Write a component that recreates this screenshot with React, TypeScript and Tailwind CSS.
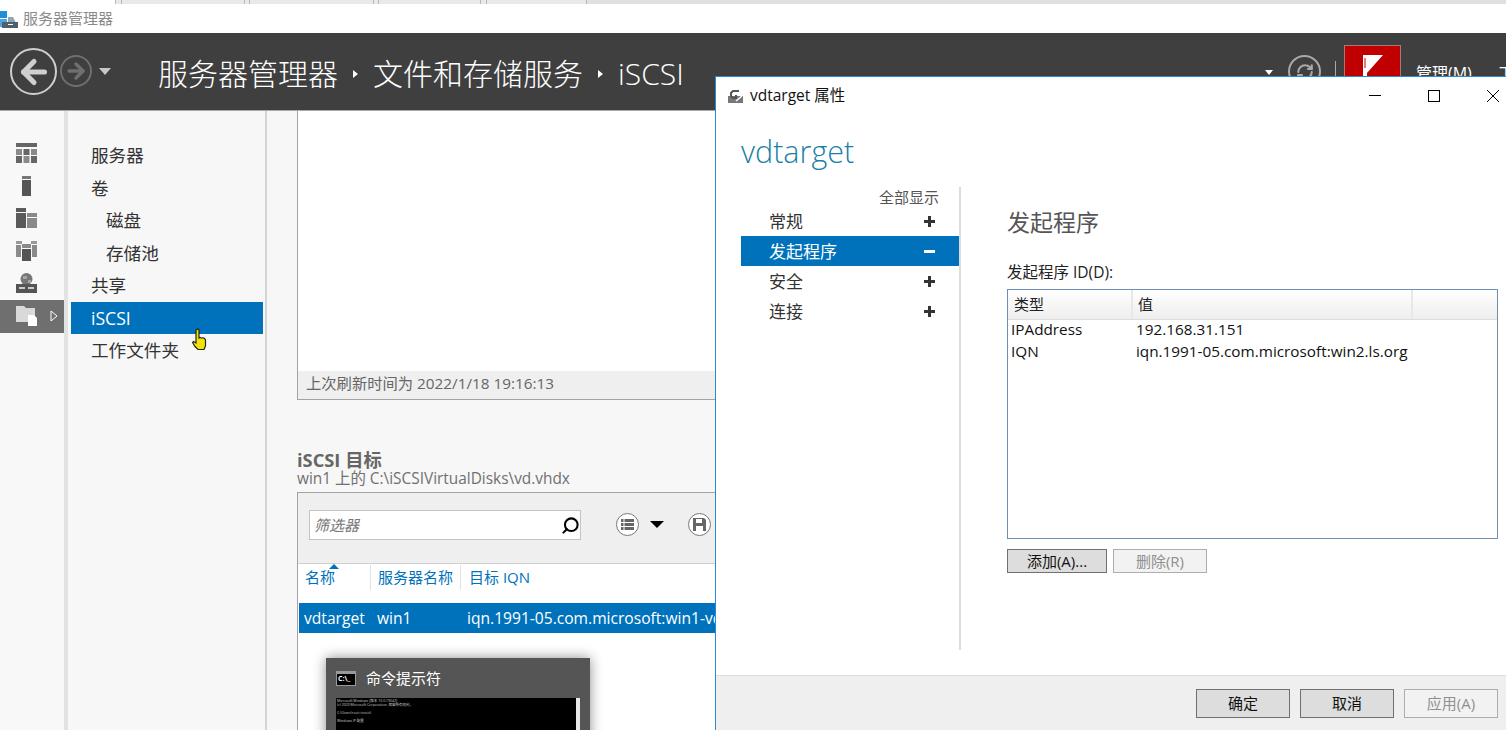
import { ArrowLeft, ArrowRight, RefreshCw, Search } from "lucide-react";

const sans = "font-['Open_Sans','Noto_Sans_CJK_SC',sans-serif]";

function RailIcon({ kind }: { kind: number }) {
	if (kind === 0) {
		return (
			<svg width="21" height="20" viewBox="0 0 21 20" fill="#666">
				<rect x="0" y="0" width="21" height="4" />
				<rect x="0" y="6" width="6" height="6" fill="#8a8a8a" />
				<rect x="7.5" y="6" width="6" height="6" />
				<rect x="15" y="6" width="6" height="6" fill="#8a8a8a" />
				<rect x="0" y="13" width="6" height="7" />
				<rect x="7.5" y="13" width="6" height="7" fill="#8a8a8a" />
				<rect x="15" y="13" width="6" height="7" />
			</svg>
		);
	}
	if (kind === 1) {
		return (
			<svg width="21" height="20" viewBox="0 0 21 20" fill="#555">
				<rect x="6" y="0" width="9" height="3" fill="#777" />
				<rect x="6" y="4" width="9" height="16" />
			</svg>
		);
	}
	if (kind === 2) {
		return (
			<svg width="21" height="20" viewBox="0 0 21 20" fill="#5a5a5a">
				<rect x="0" y="0" width="10" height="4" />
				<rect x="0" y="5" width="10" height="15" />
				<rect x="11" y="5" width="10" height="4" fill="#8a8a8a" />
				<rect x="11" y="10" width="10" height="10" fill="#8a8a8a" />
			</svg>
		);
	}
	if (kind === 3) {
		return (
			<svg width="21" height="20" viewBox="0 0 21 20" fill="#555">
				<rect x="0" y="0" width="6" height="3" fill="#999" />
				<rect x="15" y="0" width="6" height="3" fill="#999" />
				<rect x="0" y="4" width="5" height="12" fill="#8a8a8a" />
				<rect x="16" y="4" width="5" height="12" fill="#8a8a8a" />
				<rect x="6" y="3" width="9" height="4" fill="#8a8a8a" />
				<rect x="6" y="8" width="9" height="12" />
			</svg>
		);
	}
	if (kind === 4) {
		return (
			<svg width="21" height="20" viewBox="0 0 21 20" fill="#555">
				<circle cx="10.5" cy="6" r="6" fill="#777" />
				<path d="M7 3h4v3H7zM12 7h3v3h-3z" fill="#a5a5a5" />
				<rect x="0" y="11" width="21" height="9" />
				<rect x="3" y="14" width="6" height="2" fill="#ccc" />
				<rect x="12" y="14" width="6" height="2" fill="#ccc" />
			</svg>
		);
	}
	return (
		<svg width="21" height="20" viewBox="0 0 21 20">
			<path d="M0 0h8l2 2h9v14H0z" fill="#d9d9d9" />
			<path d="M12 9h6l3 3v8h-9z" fill="#fff" />
		</svg>
	);
}

function Rail() {
	return (
		<div className="w-16 shrink-0 pt-[26px] bg-[#f8f8f8]">
			{[0, 1, 2, 3, 4].map((k) => (
				<div key={k} className="h-[32.5px] pl-4 flex items-center">
					<RailIcon kind={k} />
				</div>
			))}
			<div className="h-[33px] pl-4 flex items-center gap-[13px] bg-[#6f6f6f]">
				<RailIcon kind={5} />
				<svg width="8" height="12" viewBox="0 0 8 12" fill="none" stroke="#fff">
					<path d="M1 1l6 5-6 5z" />
				</svg>
			</div>
		</div>
	);
}

function NavItem({ label, indent, active }: { label: string; indent?: boolean; active?: boolean }) {
	return (
		<div
			className={`h-[32.5px] flex items-center text-[17.6px] ${indent ? "pl-[35px]" : "pl-5"} ${
				active ? "bg-[#0072bc] text-white" : "text-[#333]"
			}`}
		>
			{label}
		</div>
	);
}

function Nav() {
	return (
		<div className="relative w-[199px] shrink-0 border-r-2 border-[#d4d4d4] pt-[28px] pl-[3px] pr-[2px] bg-[#f7f7f7]">
			<NavItem label="服务器" />
			<NavItem label="卷" />
			<NavItem label="磁盘" indent />
			<NavItem label="存储池" indent />
			<NavItem label="共享" />
			<NavItem label="iSCSI" active />
			<NavItem label="工作文件夹" />
			{/* hand cursor */}
			<svg className="absolute left-[124px] top-[217px]" width="16" height="24" viewBox="0 0 16 24">
				<path
					d="M5 1.5c1-1 2-.5 2 1V10l1-.5 1.500.5 1.500-.2 1.500.7 1 1.500V18l-1.500 3.500H6l-3-3-2.500-4 1-1 2.500 1.500V2z"
					fill="#f2e400"
					stroke="#222"
					strokeWidth="1.200"
				/>
			</svg>
		</div>
	);
}

function MainContent() {
	return (
		<div className="relative flex-1 min-w-0 pl-[30px] bg-[#f7f7f7]">
			<div className="w-full h-[289px] border-x border-b border-[#a3a3a3] bg-white flex flex-col justify-end">
				<div className="h-[28px] bg-[#efefef] pl-[8px] pb-[3px] flex items-center text-[15.300px] text-[#666]">
					上次刷新时间为 2022/1/18 19:16:13
				</div>
			</div>
			<div className="mt-[49px] text-[18.300px] leading-[21px] font-bold text-[#666]">iSCSI 目标</div>
			<div className="text-[15.400px] leading-[18px] text-[#707070]">win1 上的 C:\iSCSIVirtualDisks\vd.vhdx</div>
			<div className="mt-[4px] h-[300px] border-l border-t border-[#a3a3a3] bg-white">
				<div className="h-[71px] bg-[#efefef] border-b border-[#cfcfcf] flex pt-[17px] pl-[11px]">
					<div className="w-[272px] h-[30px] border border-[#c4c4c4] bg-white flex items-center justify-between pl-[4px] pr-0">
						<span className="text-[15px] italic text-[#777]">筛选器</span>
						<Search size={19} strokeWidth={2.6} className="text-black -scale-x-100" />
					</div>
					<div className="ml-[35px] mt-[3px] w-[23px] h-[23px] rounded-full border border-[#777] bg-white flex items-center justify-center">
						<svg width="13" height="11" viewBox="0 0 13 11" fill="#666">
							<rect x="0" y="0" width="2.500" height="3" />
							<rect x="3.500" y="0" width="9.500" height="3" />
							<rect x="0" y="4" width="2.500" height="3" />
							<rect x="3.500" y="4" width="9.500" height="3" />
							<rect x="0" y="8" width="2.500" height="3" />
							<rect x="3.500" y="8" width="9.500" height="3" />
						</svg>
					</div>
					<div className="ml-[11px] mt-[11px] w-0 h-0 border-x-[7px] border-x-transparent border-t-[7px] border-t-black" />
					<div className="ml-[24px] mt-[3px] w-[23px] h-[23px] rounded-full border border-[#777] bg-white flex items-center justify-center">
						<svg width="13" height="13" viewBox="0 0 13 13" fill="#666">
							<path d="M0 0h11l2 2v11H0z" />
							<rect x="3" y="1" width="6" height="4" fill="#fff" />
							<rect x="3" y="8" width="7" height="5" fill="#fff" />
						</svg>
					</div>
				</div>
				<div className="relative h-[39px] flex text-[15px] text-[#0072bc]">
					<div className="absolute left-[31px] top-[0px] w-0 h-0 border-x-[5px] border-x-transparent border-b-[5px] border-b-[#0072bc]" />
					<div className="w-[73px] h-[25px] mt-[1px] pl-[7px] pt-[1px] border-r border-[#e2e2e2]">名称</div>
					<div className="w-[90px] h-[25px] mt-[1px] pl-[7px] pt-[1px] border-r border-[#e2e2e2] whitespace-nowrap">服务器名称</div>
					<div className="pl-[8px] pt-[2px]">目标 IQN</div>
				</div>
				<div className="h-[30px] ml-[1px] pt-[1px] bg-[#0072bc] text-white text-[15.600px] flex items-center whitespace-nowrap overflow-hidden">
					<span className="w-[73px] pl-[5px]">vdtarget</span>
					<span className="w-[90px] pl-[5px]">win1</span>
					<span className="pl-[5px]">iqn.1991-05.com.microsoft:win1-vd</span>
				</div>
			</div>
			{/* taskbar thumbnail */}
			<div className="absolute left-[59px] top-[547px] w-[264px] h-[90px] bg-[#555] shadow-[0_0_12px_rgba(0,0,0,0.45)] pt-[9px] pl-[10px]">
				<div className="flex items-center gap-[10px]">
					<div className="w-5 h-[15px] bg-black border border-[#999] border-t-[3px] text-[7px] leading-[10px] text-white font-bold pl-[1px]">C:\_</div>
					<span className="text-[15px] text-white">命令提示符</span>
				</div>
				<div className="mt-[8px] w-[244px] h-[60px] bg-black flex justify-between">
					<div className="pl-[1px] pt-[1px] text-[3.500px] leading-[4px] text-[#ccc]">
						<div>Microsoft Windows [版本 10.0.19042]</div>
						<div>(c) 2020 Microsoft Corporation. 保留所有权利。</div>
						<div className="mt-[4px]">C:\Users\root&gt;iscsicli</div>
						<div className="mt-[4px]">Windows IP 配置</div>
					</div>
					<div className="w-[4px] bg-[#e8e8e8]" />
				</div>
			</div>
		</div>
	);
}

function Btn({ label, w, h, off }: { label: string; w: string; h: string; off?: boolean }) {
	return (
		<div
			className={`${w} ${h} flex items-center justify-center text-[15px] border ${
				off ? "border-[#adadad] bg-[#f2f2f2] text-[#8f8f8f]" : "border-[#707070] bg-[#dddddd] text-[#111]"
			}`}
		>
			{label}
		</div>
	);
}

function SideRow({ label, active }: { label: string; active?: boolean }) {
	return (
		<div
			className={`h-[30px] flex items-center justify-between pl-7 pr-[24px] text-[17px] ${
				active ? "bg-[#0072bc] text-white" : "text-[#333]"
			}`}
		>
			<span className="pt-[1px]">{label}</span>
			<span className="relative block w-[11px] h-[11px]">
				<span className={`absolute left-0 top-[4px] w-[11px] h-[3px] ${active ? "bg-white" : "bg-[#333]"}`} />
				{!active && <span className="absolute left-[4px] top-0 w-[3px] h-[11px] bg-[#333]" />}
			</span>
		</div>
	);
}

function Dialog() {
	return (
		<div className="absolute left-[715px] top-[76px] w-[791px] h-[654px] bg-white border-l border-t border-[#2b8ad6] flex flex-col">
			<div className="h-[37px] shrink-0 flex items-center pl-[11px]">
				<svg width="17" height="16" viewBox="0 0 17 16" fill="none">
					<path d="M1 8h15v7H1z" fill="#777" />
					<path d="M12 3H6L4 5v3l2 2h3V7" stroke="#555" strokeWidth="2" />
					<path d="M9 13l6-5" stroke="#fff" strokeWidth="1.500" />
				</svg>
				<span className="ml-[6px] text-[15.500px] text-[#111]">vdtarget 属性</span>
				<div className="ml-auto flex items-center">
					<span className="w-3 h-px bg-black" />
					<span className="ml-[47px] w-[12px] h-[12px] border border-black" />
					<svg className="ml-[46px] mr-[6px]" width="14" height="14" viewBox="0 0 14 14" stroke="#000" strokeWidth="1">
						<path d="M1 1l12 12M13 1L1 13" />
					</svg>
				</div>
			</div>
			<div className="flex-1 min-h-0 flex pl-[25px]">
				<div className="w-[220px] shrink-0">
					<div className="mt-[15px] h-[44px] text-[30.500px] leading-[44px] font-light text-[#1b7fa8]">vdtarget</div>
					<div className="mt-[14px] border-r-2 border-[#dcdcdc] h-[463px]">
						<div className="h-[19px] pr-[20px] text-right text-[15px] leading-[20px] text-[#555]">全部显示</div>
						<div className="w-[218px]">
							<SideRow label="常规" />
							<SideRow label="发起程序" active />
							<SideRow label="安全" />
							<SideRow label="连接" />
						</div>
					</div>
				</div>
				<div className="flex-1 min-w-0 pl-[46px] pr-[8px]">
					<div className="mt-[92px] text-[23px] leading-[32px] text-[#555]">发起程序</div>
					<div className="mt-[24px] text-[15.500px] leading-[20px] text-[#222]">发起程序 ID(D):</div>
					<div className="mt-[7px] h-[250px] border border-[#6d8fb3]">
						<div className="h-[30px] flex text-[15px] text-[#222] bg-gradient-to-b from-white to-[#eeeeee] border-b border-[#dcdcdc]">
							<div className="w-[125px] pl-[6px] pt-[3px] border-r-2 border-[#e8e8e8]">类型</div>
							<div className="w-[280px] pl-[5px] pt-[3px] border-r-2 border-[#e8e8e8]">值</div>
						</div>
						<div className="-mt-[2px] text-[15.300px] leading-[22px] text-[#111]">
							<div className="flex">
								<span className="w-[128px] pl-[3px]">IPAddress</span>
								<span>192.168.31.151</span>
							</div>
							<div className="flex">
								<span className="w-[128px] pl-[3px]">IQN</span>
								<span>iqn.1991-05.com.microsoft:win2.ls.org</span>
							</div>
						</div>
					</div>
					<div className="mt-[10px] flex gap-[6px]">
						<Btn label="添加(A)..." w="w-[100px]" h="h-[24px]" />
						<Btn label="删除(R)" w="w-[94px]" h="h-[24px]" off />
					</div>
				</div>
			</div>
			<div className="h-[55px] shrink-0 bg-[#efefef] border-t border-[#dcdcdc] flex items-center justify-end gap-[10px] pr-[8px]">
				<Btn label="确定" w="w-[94px]" h="h-[29px]" />
				<Btn label="取消" w="w-[94px]" h="h-[29px]" />
				<Btn label="应用(A)" w="w-[94px]" h="h-[29px]" off />
			</div>
		</div>
	);
}

export default function App() {
	return (
		<div className={`relative w-[1506px] h-[730px] overflow-hidden bg-white flex flex-col ${sans}`}>
			{/* browser tab strip */}
			<div className="h-1 shrink-0 bg-[#e0e0e2] flex">
				<div className="w-[116px] bg-white border-r border-[#b9b9b9]" />
				<div className="w-[6px] bg-[#e9e9ec] border-r border-[#b9b9b9]" />
				<div className="w-[123px] bg-[#e9e9ec] border-r border-[#b9b9b9]" />
				<div className="w-[5px] bg-[#e9e9ec] border-r border-[#b9b9b9]" />
				<div className="w-[124px] bg-[#e9e9ec] border-r border-[#b9b9b9]" />
				<div className="w-[5px] bg-[#e9e9ec] border-r border-[#b9b9b9]" />
				<div className="w-[102px] bg-[#e9e9ec] border-r border-[#b9b9b9]" />
				<div className="w-[6px] bg-[#e9e9ec] border-r border-[#b9b9b9]" />
				<div className="w-[100px] bg-[#e9e9ec] border-r border-[#b9b9b9]" />
			</div>
			{/* window title */}
			<div className="h-[29px] shrink-0 flex items-center">
				<svg width="18" height="20" viewBox="0 0 18 20">
					<rect x="0" y="2" width="7" height="7" fill="#1f8fd6" />
					<rect x="0" y="10" width="7" height="8" fill="#4ea6de" />
					<path d="M8 8h5l3 6H8z" fill="#8fa7b5" />
					<rect x="2" y="13" width="16" height="6" fill="#50606b" />
					<rect x="8" y="15" width="5" height="1" fill="#fff" />
				</svg>
				<span className="ml-[5px] text-[15px] text-[#8a8a8a]">服务器管理器</span>
			</div>
			{/* dark header */}
			<div className="h-[78px] shrink-0 bg-[#3f3f3f] border-b border-[#a8a8a8] flex pl-[10px]">
				<div className="mt-[15px] w-[47px] h-[47px] rounded-full border-[2px] border-[#cfcfcf] flex items-center justify-center">
					<ArrowLeft size={36} strokeWidth={3.4} className="text-[#cfcfcf]" />
				</div>
				<div className="mt-[22px] ml-[3px] w-[32px] h-[32px] rounded-full border-[2px] border-[#6f6f6f] flex items-center justify-center">
					<ArrowRight size={24} strokeWidth={3.4} className="text-[#6f6f6f]" />
				</div>
				<div className="mt-[35px] ml-[7px] w-0 h-0 border-x-[6px] border-x-transparent border-t-[7px] border-t-[#c8c8c8]" />
				<div className="ml-[47px] mt-[5px] text-[30px] leading-[42px] font-light text-white whitespace-nowrap flex items-center">
					<span>服务器管理器</span>
					<span className="mx-[15px] w-0 h-0 border-y-[4px] border-y-transparent border-l-[5px] border-l-white" />
					<span>文件和存储服务</span>
					<span className="mx-[15px] w-0 h-0 border-y-[4px] border-y-transparent border-l-[5px] border-l-white" />
					<span>iSCSI</span>
				</div>
				<div className="ml-auto flex items-start whitespace-nowrap">
					<div className="mt-[37px] w-0 h-0 border-x-[4px] border-x-transparent border-t-[5px] border-t-white" />
					<div className="ml-[15px] mt-[22px] w-[33px] h-[33px] rounded-full border-[2px] border-[#a9a9a9] flex items-center justify-center">
						<RefreshCw size={18} strokeWidth={2.8} className="text-[#a9a9a9]" />
					</div>
					<div className="ml-[14px] mt-[28px] w-px h-[16px] bg-[#a9a9a9]" />
					<div className="ml-[8px] mt-[12px] w-[57px] h-[40px] bg-[#c00000] border border-[#a87878] flex justify-center pt-[9px]">
						<svg width="22" height="26" viewBox="0 0 22 26">
							<path d="M1 0h4v26H1z" fill="#fff" />
							<path d="M5 0h16L5 18z" fill="#fff" />
							<path d="M3 3v10" stroke="#c00000" strokeWidth="1" />
						</svg>
					</div>
					<span className="ml-[15px] mt-[28px] w-[82px] text-[16px] text-white">管理(M)</span>
					<span className="mt-[28px] w-[8px] overflow-hidden text-[16px] text-white">工</span>
				</div>
			</div>
			{/* body */}
			<div className="flex-1 min-h-0 flex">
				<Rail />
				<div className="w-[4px] shrink-0 bg-[#e2e2e2]" />
				<Nav />
				<MainContent />
			</div>
			<Dialog />
		</div>
	);
}
